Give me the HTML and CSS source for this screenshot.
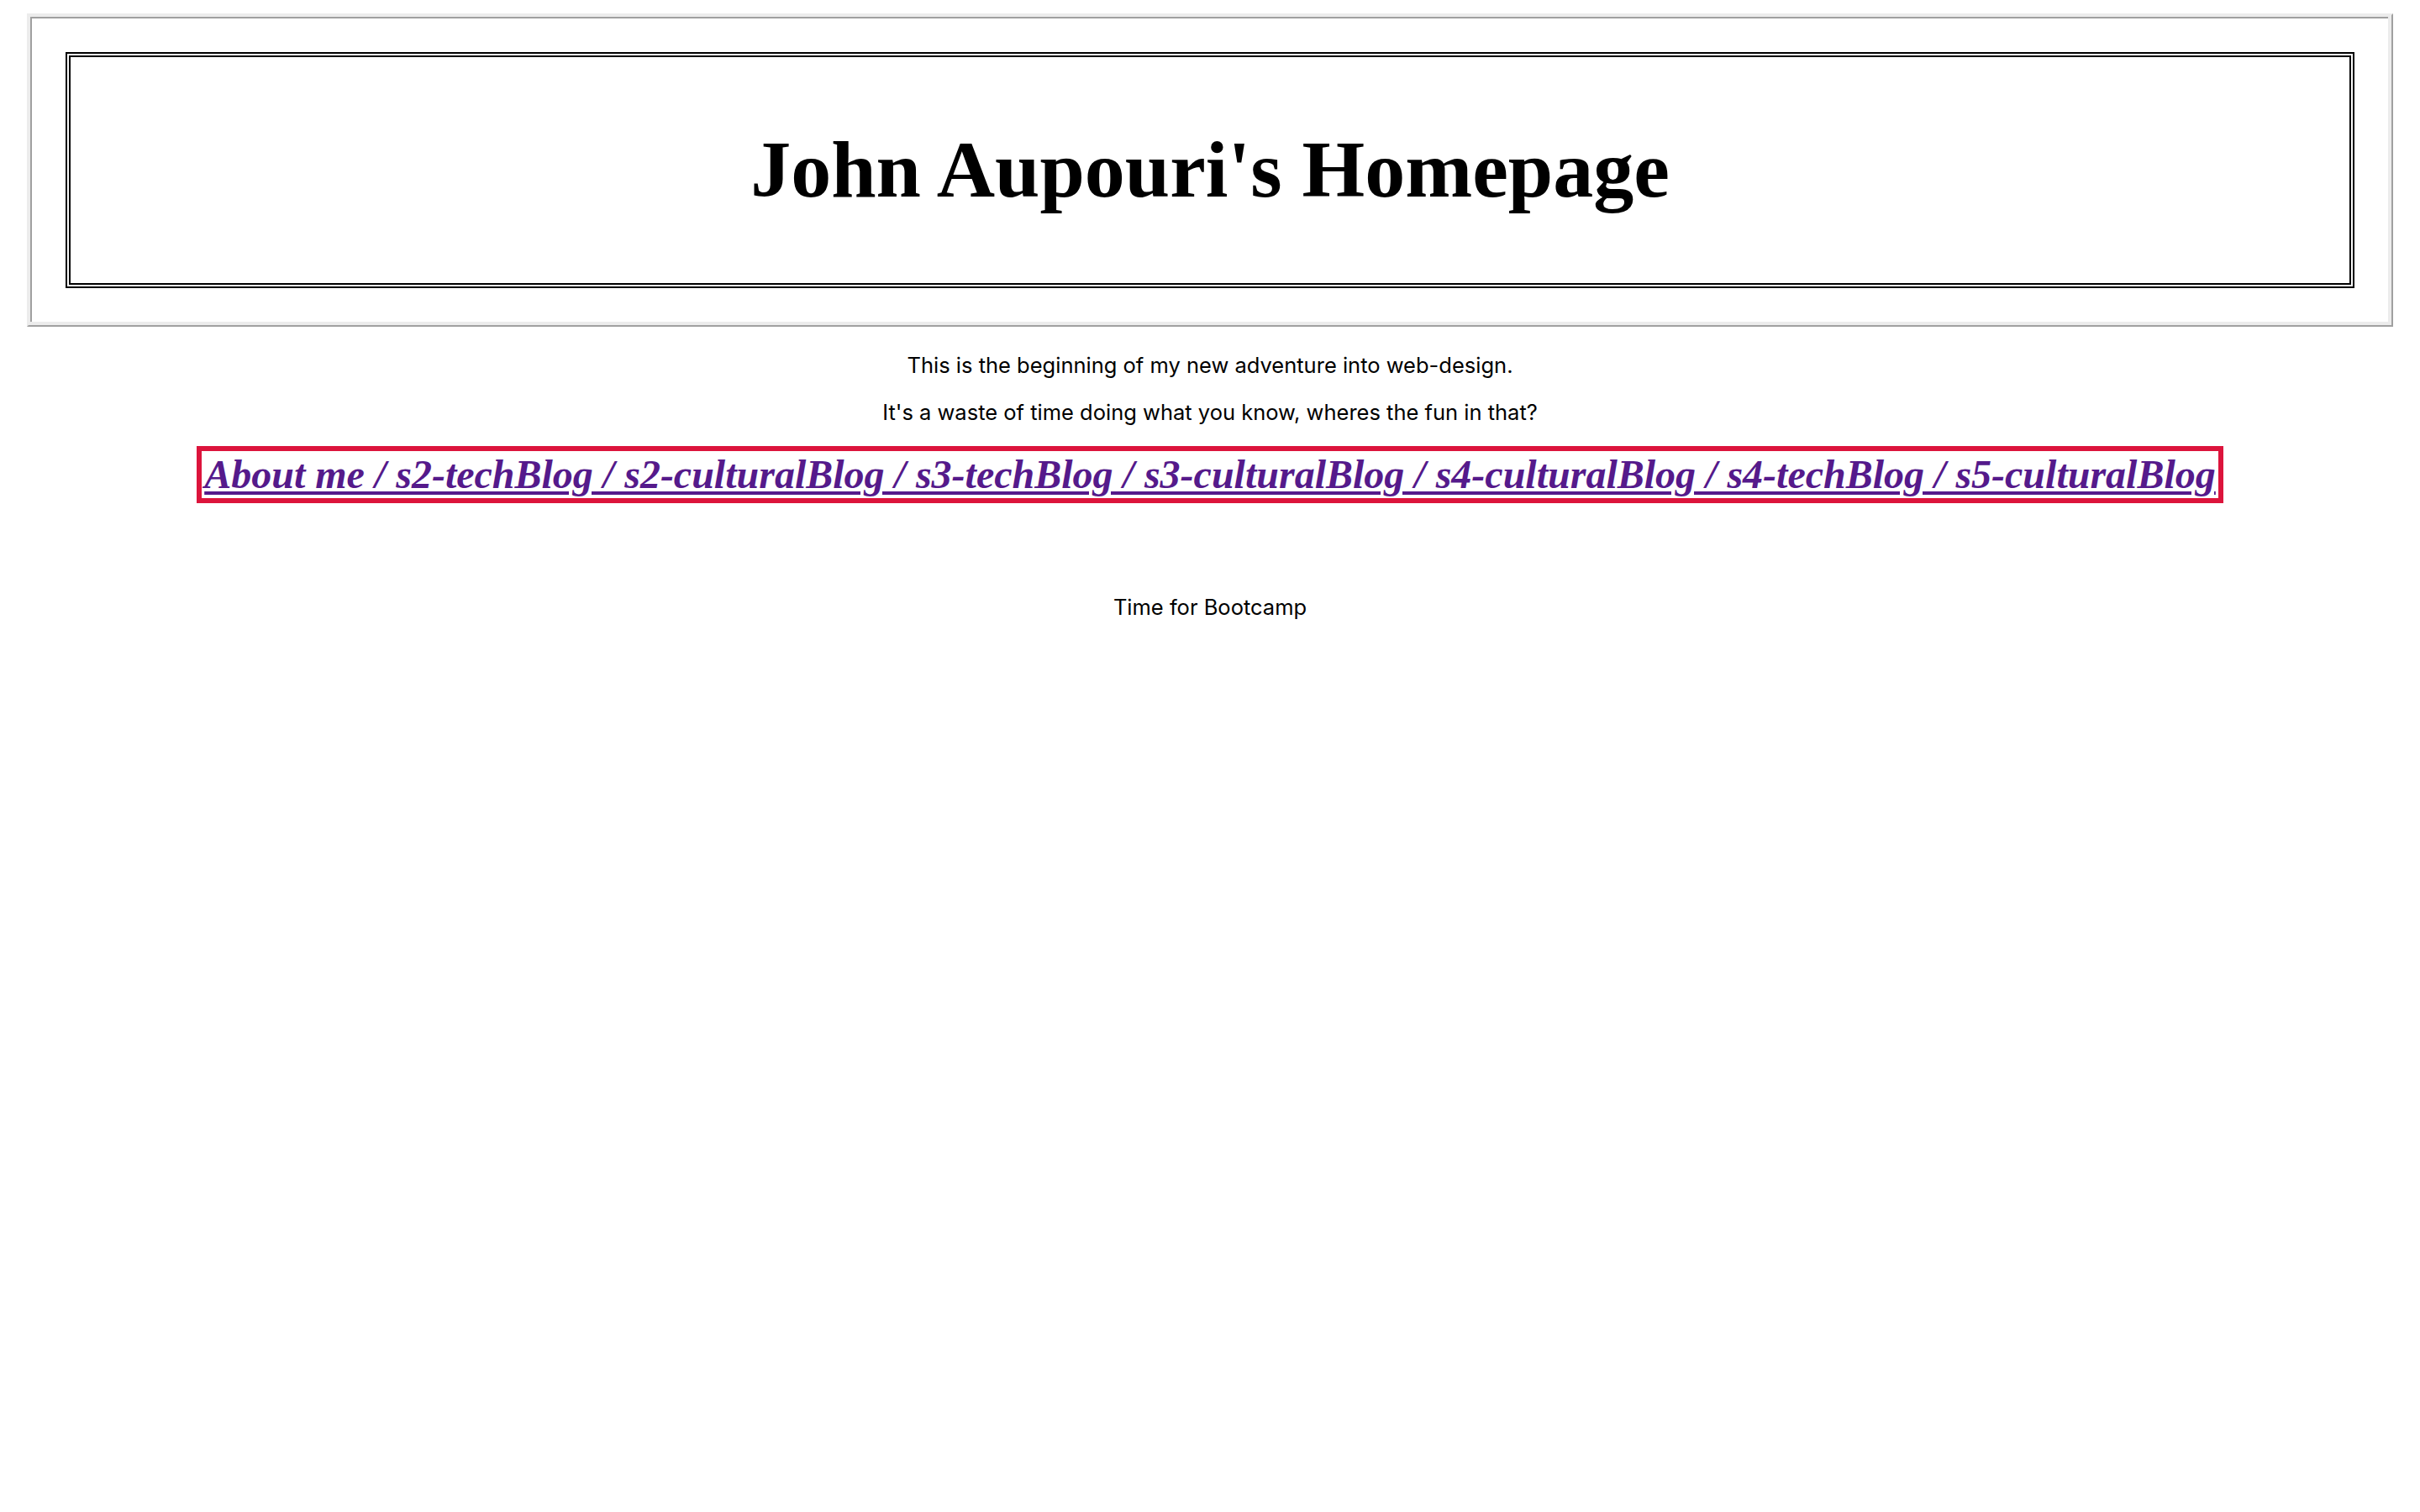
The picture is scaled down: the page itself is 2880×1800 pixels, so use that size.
FILE: index.html
```html
<!DOCTYPE html>
<html lang="en">
<head>
<meta charset="utf-8">
<title>John Aupouri's Homepage</title>
<link rel="stylesheet" href="styles.css">
</head>
<body>
<header class="frame">
  <div class="title-box">
    <h1 class="title">John Aupouri's Homepage</h1>
  </div>
</header>
<main class="content">
  <p class="intro intro-first">This is the beginning of my new adventure into web-design.</p>
  <p class="intro intro-second">It's a waste of time doing what you know, wheres the fun in that?</p>
  <nav class="nav">
    <span class="nav-box"><a class="nav-link" href="#">About me / s2-techBlog / s2-culturalBlog / s3-techBlog / s3-culturalBlog / s4-culturalBlog / s4-techBlog / s5-culturalBlog</a></span>
  </nav>
  <p class="intro outro">Time for Bootcamp</p>
</main>
</body>
</html>
```
FILE: styles.css
```css
html, body {
  background: #ffffff;
}
body {
  margin: 16px;
  font-family: Inter, "Noto Sans", sans-serif;
  color: #000000;
}
.frame {
  margin: 0 16px;
  border: 2px solid;
  border-color: #ececec #a0a0a0 #a0a0a0 #ececec;
  box-shadow: inset 2px 2px 0 #ececec, inset -4px -4px 0 #ececec, inset 4px 4px 0 #a0a0a0;
  padding: 44px;
}
.title-box {
  border: 6px double #000000;
}
.title {
  margin: 0;
  padding: 81px 0 82px;
  text-align: center;
  font-family: "Liberation Serif", "Times New Roman", serif;
  font-weight: 700;
  font-size: 96px;
  line-height: 106px;
}
.content {
  text-align: center;
}
.intro {
  margin: 0;
  font-size: 25.5px;
  line-height: 30px;
}
.intro-first {
  margin-top: 31px;
}
.intro-second {
  margin-top: 26px;
}
.nav {
  margin-top: 25px;
  line-height: 0;
}
.nav-box {
  display: inline-block;
  border: 6px solid #dc143c;
  padding: 0 3px;
  font-family: "Liberation Serif", "Times New Roman", serif;
  font-weight: 700;
  font-style: italic;
  font-size: 48px;
  line-height: 56px;
}
.nav-link {
  color: #551a8b;
  text-decoration: underline;
  text-decoration-thickness: 4px;
  text-underline-offset: 4px;
}
.outro {
  margin-top: 109px;
}
```
